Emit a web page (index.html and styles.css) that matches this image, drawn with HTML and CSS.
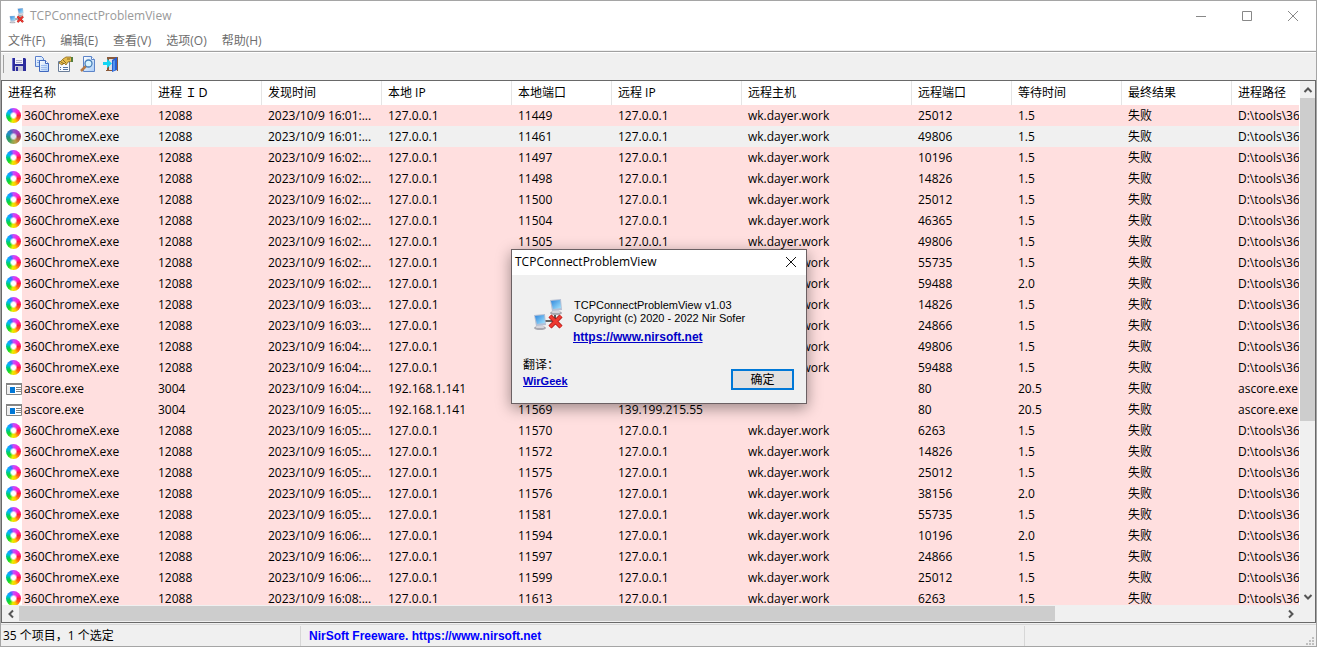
FILE: index.html
```html
<!DOCTYPE html>
<html lang="zh-CN">
<head>
<meta charset="utf-8">
<title>TCPConnectProblemView</title>
<link rel="stylesheet" href="styles.css">
</head>
<body>
<svg class="defs" aria-hidden="true">
  <defs>
    <linearGradient id="screen" x1="0" y1="0" x2="1" y2="1">
      <stop offset="0" stop-color="#2f86dc"/><stop offset="1" stop-color="#a5e6ff"/>
    </linearGradient>
    <linearGradient id="page" x1="0" y1="0" x2="1" y2="1">
      <stop offset="0" stop-color="#ffffff"/><stop offset="1" stop-color="#a9cdf8"/>
    </linearGradient>
    <symbol id="pc" viewBox="0 0 14 16">
      <ellipse cx="7" cy="14" rx="6" ry="2" fill="#a8a8b0"/>
      <path d="M4 11h6l1 3H3z" fill="#d5d5dc"/>
      <path d="M1 1l11-1 1 11-10 1z" fill="#b4bfd4"/>
      <path d="M2 2l9-1 1 8-8 1z" fill="url(#screen)"/>
    </symbol>
    <symbol id="net" viewBox="0 0 32 32">
      <path d="M11 22h11M22 14v9" stroke="#333" stroke-width="1.6" fill="none"/>
      <use href="#pc" x="16" y="0" width="14" height="16"/>
      <use href="#pc" x="0" y="15" width="14" height="16"/>
      <path d="M17 17l11 11M28 17L17 28" stroke="#a51616" stroke-width="4.4"/>
      <path d="M17 17l11 11M28 17L17 28" stroke="#ee3930" stroke-width="3"/>
    </symbol>
    <symbol id="exe" viewBox="0 0 16 12">
      <path d="M.5.5h15v11H.5z" fill="#fff" stroke="#858585"/>
      <path d="M0 0h16v2H0z" fill="#858585"/>
      <path d="M1 3h3v8H1z" fill="#eee"/>
      <path d="M4 4h5v6H4z" fill="#0078d7"/>
      <path d="M10 4.5h5M10 6.5h5M10 8.5h5" stroke="#858585"/>
    </symbol>
  </defs>
</svg>

<main class="window">
  <header class="titlebar">
    <svg class="app-icon"><use href="#net"/></svg>
    <h1 class="title">TCPConnectProblemView</h1>
    <div class="controls">
      <button class="control" aria-label="最小化"><svg viewBox="0 0 12 12"><path d="M1 6.5h10"/></svg></button>
      <button class="control" aria-label="最大化"><svg viewBox="0 0 12 12"><path d="M1.5 1.5h9v9h-9z"/></svg></button>
      <button class="control" aria-label="关闭"><svg viewBox="0 0 12 12"><path d="M1 1l10 10M11 1L1 11"/></svg></button>
    </div>
  </header>

  <nav class="menu">
    <button class="menu-item">文件(F)</button>
    <button class="menu-item">编辑(E)</button>
    <button class="menu-item">查看(V)</button>
    <button class="menu-item">选项(O)</button>
    <button class="menu-item">帮助(H)</button>
  </nav>

  <div class="toolbar">
    <button class="tool" aria-label="保存"><svg viewBox="0 0 16 16">
      <path d="M1 2h13l1 1v12H2l-1-1z" fill="#2c2c9c"/><path d="M4 2h8v6H4z" fill="#f4f4fa"/><path d="M5 4.5h6M5 6.5h6" stroke="#a9a9c4"/><path d="M4 10h8v5H4z" fill="#c8c8d8"/><path d="M5 11h2v4H5z" fill="#2c2c9c"/><path d="M1 2h1v12H1z" fill="#6a6ad0"/>
    </svg></button>
    <button class="tool" aria-label="复制"><svg viewBox="0 0 16 16">
      <path d="M1.500.500h6l2 2v8h-8z" fill="url(#page)" stroke="#5a80cc"/><path d="M3 4.500h5M3 6.500h4" stroke="#8aace4"/>
      <path d="M5.500 4.500h6l3 3v8h-9z" fill="url(#page)" stroke="#4068bf"/><path d="M11.500 4.500v3h3" fill="#fff" stroke="#4068bf"/><path d="M7 9.500h6M7 11.500h6M7 13.500h6" stroke="#9dbcee"/>
    </svg></button>
    <button class="tool" aria-label="属性"><svg viewBox="0 0 16 16">
      <path d="M1.500 5.500h11v10h-11z" fill="#f7faff" stroke="#6a7d98"/><path d="M3 11.500h1M6 11.500h5M3 13.500h1M6 13.500h5" stroke="#55749f"/>
      <path d="M2 7l4-4 3-2h5l1 4-4 1-2 3-2-2-2 2z" fill="#e7bd4d" stroke="#8b681c" stroke-width=".8"/><path d="M4 6l3 2M6 4l3 3M10 3h3" stroke="#705619" stroke-width=".8"/><path d="M14 1h2v5h-2z" fill="#557e3d"/>
    </svg></button>
    <button class="tool" aria-label="查找"><svg viewBox="0 0 16 16">
      <path d="M3.500.500h8l3 3v12h-11z" fill="url(#page)" stroke="#5c84c8"/><path d="M11.500.500v3h3" fill="#fff" stroke="#5c84c8"/>
      <path d="M6 10l-5 5" stroke="#b57945" stroke-width="2.500"/><circle cx="8.500" cy="7.500" r="3.500" fill="#d8f4ff" stroke="#477eb9" stroke-width="1.300"/>
    </svg></button>
    <button class="tool" aria-label="退出"><svg viewBox="0 0 16 16">
      <path d="M4 1h11v14h-1V3H6v11h3v1H3v-1h1z" fill="#8a5939"/><path d="M6 3h4v11H6z" fill="#dce2e9"/><path d="M9 4l5-3v13l-5 2z" fill="#285fd1"/><path d="M10 5l2-1v10l-2 1z" fill="#5194ef"/>
      <path d="M0 6h4V3l5 4.500L4 12V9H0z" fill="#13d5f3"/>
    </svg></button>
  </div>

  <section class="list">
    <div class="list-body">
      <div class="viewport">
        <table class="grid">
          <colgroup>
            <col class="w150"><col class="w110"><col class="w120"><col class="w130"><col class="w100"><col class="w130"><col class="w170"><col class="w100"><col class="w110"><col class="w110"><col>
          </colgroup>
          <thead><tr><th>进程名称</th><th>进程 ＩＤ</th><th>发现时间</th><th>本地 IP</th><th>本地端口</th><th>远程 IP</th><th>远程主机</th><th>远程端口</th><th>等待时间</th><th>最终结果</th><th>进程路径</th></tr></thead>
          <tbody id="rows"></tbody>
        </table>
      </div>
      <div class="vbar">
        <button class="arrow" aria-label="向上"><svg viewBox="0 0 10 10"><path d="M1.500 7L5 3.500 8.500 7"/></svg></button>
        <div class="vtrack"><div class="vthumb"></div></div>
        <button class="arrow" aria-label="向下"><svg viewBox="0 0 10 10"><path d="M1.500 3L5 6.500 8.500 3"/></svg></button>
      </div>
    </div>
    <div class="hbar">
      <button class="arrow" aria-label="向左"><svg viewBox="0 0 10 10"><path d="M7 1.500L3.500 5 7 8.500"/></svg></button>
      <div class="htrack"><div class="hthumb"></div></div>
      <button class="arrow" aria-label="向右"><svg viewBox="0 0 10 10"><path d="M3 1.500L6.500 5 3 8.500"/></svg></button>
    </div>
  </section>

  <footer class="status">
    <span class="status-count">35 个项目，1 个选定</span>
    <span class="status-link">NirSoft Freeware. https://www.nirsoft.net</span>
    <svg class="grip" viewBox="0 0 8 8"><path d="M6 0h2v2H6zM6 3h2v2H6zM3 3h2v2H3zM6 6h2v2H6zM3 6h2v2H3zM0 6h2v2H0z"/></svg>
  </footer>
</main>

<div class="dialog" role="dialog" aria-labelledby="about-title">
  <header class="dialog-bar">
    <h2 class="dialog-title" id="about-title">TCPConnectProblemView</h2>
    <button class="dialog-close" aria-label="关闭"><svg viewBox="0 0 12 12"><path d="M1 1l10 10M11 1L1 11"/></svg></button>
  </header>
  <div class="about">
    <svg class="about-icon"><use href="#net"/></svg>
    <div class="about-text">
      <p class="line">TCPConnectProblemView v1.03</p>
      <p class="line">Copyright (c) 2020 - 2022 Nir Sofer</p>
      <a class="link site" href="#">https://www.nirsoft.net</a>
    </div>
  </div>
  <div class="dialog-foot">
    <div class="translator">
      <p class="by">翻译：</p>
      <a class="link" href="#">WirGeek</a>
    </div>
    <button class="ok">确定</button>
  </div>
</div>
<script src="app.js"></script>
</body>
</html>
```
FILE: app.js
```js
// time, local port, remote port, wait
const chrome = [
  ["16:01", "11449", "25012", "1.5"], ["16:01", "11461", "49806", "1.5"],
  ["16:02", "11497", "10196", "1.5"], ["16:02", "11498", "14826", "1.5"],
  ["16:02", "11500", "25012", "1.5"], ["16:02", "11504", "46365", "1.5"],
  ["16:02", "11505", "49806", "1.5"], ["16:02", "", "55735", "1.5"],
  ["16:02", "", "59488", "2.0"], ["16:03", "", "14826", "1.5"],
  ["16:03", "", "24866", "1.5"], ["16:04", "", "49806", "1.5"],
  ["16:04", "", "59488", "1.5"], ["16:05", "11570", "6263", "1.5"],
  ["16:05", "11572", "14826", "1.5"], ["16:05", "11575", "25012", "1.5"],
  ["16:05", "11576", "38156", "2.0"], ["16:05", "11581", "55735", "1.5"],
  ["16:06", "11594", "10196", "2.0"], ["16:06", "11597", "24866", "1.5"],
  ["16:06", "11599", "25012", "1.5"], ["16:08", "11613", "6263", "1.5"]
].map(([t, lp, rp, w]) => ["360ChromeX.exe", "12088", t, "127.0.0.1", lp, lp && "127.0.0.1", "wk.dayer.work", rp, w, "D:\\tools\\360ChromeX"]);
const ascore = [["16:04", "", ""], ["16:05", "11569", "139.199.215.55"]]
  .map(([t, lp, ip]) => ["ascore.exe", "3004", t, "192.168.1.141", lp, ip, "", "80", "20.5", "ascore.exe"]);
const records = [...chrome.slice(0, 13), ...ascore, ...chrome.slice(13)];

document.getElementById("rows").innerHTML = records.map((r, i) => {
  const icon = r[0] === "ascore.exe" ? '<svg class="exe"><use href="#exe"/></svg>' : '<span class="swirl"></span>';
  const cells = [r[1], `2023/10/9 ${r[2]}:...`, ...r.slice(3, 9), "失败", r[9]];
  return `<tr class="${i === 1 ? "row selected" : "row"}"><td class="name"><span class="proc"><span class="icon">${icon}</span>${r[0]}</span></td>`
    + cells.map(c => `<td>${c}</td>`).join("") + "</tr>";
}).join("");
```
FILE: styles.css
```css
* { box-sizing: border-box; }
body {
  margin: 0;
  height: 100vh;
  overflow: hidden;
  background: #a0a0a0;
  font: 12px/16px "Open Sans", "Noto Sans CJK SC", sans-serif;
  color: #000;
}
button { font: inherit; color: inherit; background: none; border: 0; padding: 0; }
h1, h2, p { margin: 0; font-size: 12px; font-weight: 400; }
.defs { position: absolute; width: 0; height: 0; }
.window {
  display: flex;
  flex-direction: column;
  height: 100vh;
  border: 1px solid #a5a5a5;
  background: #f0f0f0;
}
.titlebar { display: flex; align-items: center; height: 30px; flex: none; padding-left: 8px; background: #fff; }
.app-icon { width: 16px; height: 16px; }
.title { margin-left: 5px; color: #999; }
.controls { display: flex; margin-left: auto; }
.control { display: grid; place-items: center; width: 46px; height: 28px; }
.control svg { width: 12px; height: 12px; fill: none; stroke: #888; }

.menu { display: flex; gap: 15px; flex: none; height: 19px; padding-left: 7px; background: #fff; color: #6d6d6d; }
.menu-item { height: 19px; line-height: 20px; }

.toolbar {
  display: flex;
  align-items: center;
  gap: 7px;
  flex: none;
  height: 29px;
  margin-top: 1px;
  padding: 0 0 4px 2px;
  border-top: 1px solid #a0a0a0;
  box-shadow: inset 0 1px #fff;
}
.toolbar::before { content: ""; width: 1px; height: 18px; background: #a0a0a0; }
.tool { width: 16px; height: 16px; }
.tool svg { display: block; width: 16px; height: 16px; }

.list { flex: 1; min-height: 0; display: flex; flex-direction: column; border: 1px solid #696969; background: #fff; }
.list-body { flex: 1; min-height: 0; display: flex; }
.viewport { flex: 1; min-width: 0; overflow: hidden; }
.grid { width: 100%; table-layout: fixed; border-collapse: separate; border-spacing: 0; }
.w100 { width: 100px; }
.w110 { width: 110px; }
.w120 { width: 120px; }
.w130 { width: 130px; }
.w150 { width: 150px; }
.w170 { width: 170px; }
.grid th { height: 24px; padding: 0 6px; text-align: left; font-weight: 400; white-space: nowrap; border-right: 1px solid #e5e5e5; }
.grid th:last-child { border-right: 0; }
.grid td { height: 21px; padding: 0 0 0 6px; line-height: 21px; white-space: nowrap; overflow: hidden; }
.row { background: #ffdfdf; }
.row.selected { background: #f0f0f0; }
.grid .name { padding: 0; }
.proc { display: flex; gap: 2px; height: 21px; }
.icon { display: flex; align-items: center; width: 20px; padding-left: 4px; background: #fff; }
.swirl {
  width: 15px;
  height: 15px;
  border-radius: 50%;
  background:
    radial-gradient(circle, #fff 0 2px, transparent 4px),
    conic-gradient(from 0deg, #c34cff, #ff20d0 50deg, #ff1c3c 90deg, #ff5a18 125deg, #ffc800 160deg, #e8f000 190deg, #20dc20 225deg, #00cf60 255deg, #00b8ff 300deg, #3c70ff 335deg, #c34cff);
}
.selected .swirl {
  background:
    radial-gradient(circle, #dce6f2 0 2px, transparent 4px),
    conic-gradient(from 0deg, #8a58c8, #a538b8 50deg, #a83c60 90deg, #b86a40 125deg, #b8a048 160deg, #90a850 190deg, #38a060 225deg, #209878 255deg, #2090c8 300deg, #4070c0 335deg, #8a58c8);
}
.exe { width: 16px; height: 12px; flex: none; }

.vbar { display: flex; flex-direction: column; align-items: center; width: 16px; border-left: 1px solid #fff; background: #f0f0f0; }
.hbar { display: flex; flex: none; height: 17px; padding-right: 16px; background: #f0f0f0; }
.arrow { display: grid; place-items: center; flex: none; width: 17px; height: 17px; }
.vbar .arrow { width: 15px; }
.arrow svg { width: 10px; height: 10px; fill: none; stroke: #555; stroke-width: 2; }
.vtrack { flex: 1; width: 100%; }
.vthumb { height: 66%; background: #cdcdcd; }
.htrack { flex: 1; }
.hthumb { width: 82%; height: 15px; margin-top: 1px; background: #cdcdcd; }

.status { display: flex; align-items: center; flex: none; height: 22px; margin-top: 1px; padding-left: 2px; border-top: 1px solid #d7d7d7; }
.status-count { width: 297px; }
.status-link { width: 725px; padding-left: 8px; border: 1px solid #d7d7d7; border-width: 0 1px; line-height: 20px; font-family: "Liberation Sans", sans-serif; font-weight: 700; color: #00f; }
.grip { width: 8px; height: 8px; margin: 10px 2px 0 auto; fill: #bfbfbf; }

.dialog {
  position: absolute;
  left: 511px;
  top: 249px;
  width: 296px;
  border: 1px solid #6b6063;
  background: #f0f0f0;
  box-shadow: 0 4px 14px rgba(0, 0, 0, .4);
}
.dialog-bar { display: flex; align-items: center; justify-content: space-between; height: 25px; padding: 0 9px 1px 3px; background: #fff; }
.dialog-close { width: 12px; height: 12px; }
.dialog-close svg { display: block; width: 12px; height: 12px; fill: none; stroke: #111; }
.about { display: flex; gap: 8px; padding: 24px 0 0 21px; }
.about-icon { width: 32px; height: 32px; }
.line { padding-left: 1px; font: 11px/13px "Liberation Sans", sans-serif; }
.link { font: 700 11px/16px "Liberation Sans", sans-serif; color: #0000c8; }
.site { display: block; margin-top: 4px; font-size: 12px; }
.dialog-foot { display: flex; justify-content: space-between; padding: 12px 12px 13px 11px; }
.by { line-height: 16px; }
.ok { width: 63px; height: 21px; margin-top: 12px; border: 2px solid #0078d7; background: #e1e1e1; line-height: 17px; }
```
